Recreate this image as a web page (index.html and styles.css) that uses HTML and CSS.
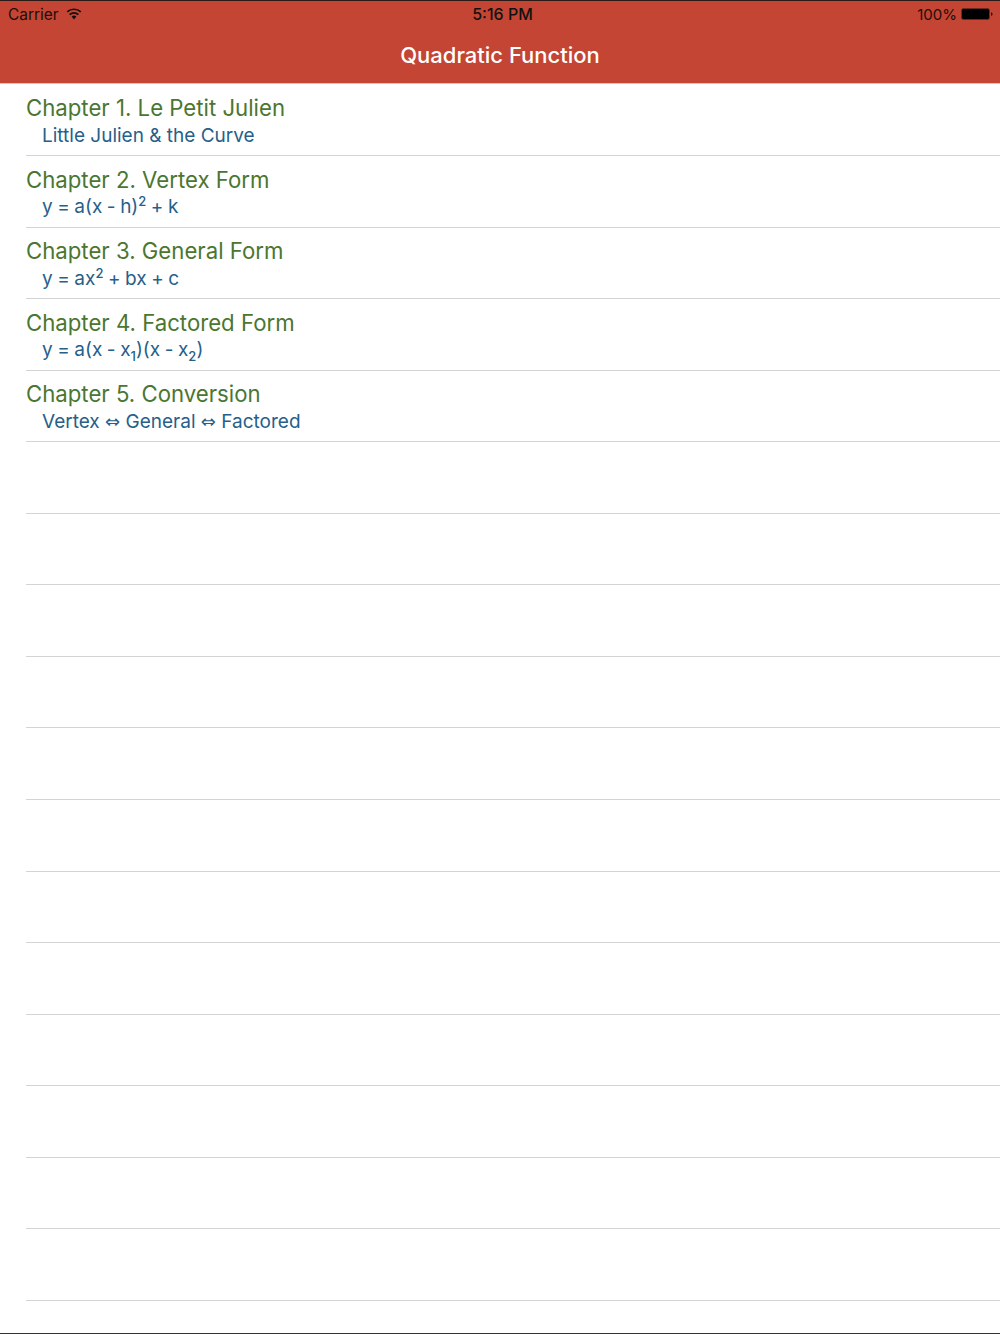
FILE: index.html
```html
<!DOCTYPE html>
<html lang="en">
<head>
<meta charset="utf-8">
<title>Quadratic Function</title>
<link rel="stylesheet" href="styles.css">
</head>
<body>
<div class="screen">
  <header class="bar">
    <div class="status">
      <div class="status-left">
        <span>Carrier</span>
        <svg class="wifi" width="16" height="12" viewBox="0 0 16 12"><path d="M8 11.5 5.6 8.6a3.6 3.6 0 0 1 4.8 0Z" fill="#111"/><path d="M3.6 6.6a6.4 6.4 0 0 1 8.8 0" fill="none" stroke="#111" stroke-width="1.7"/><path d="M1.2 3.9a10 10 0 0 1 13.6 0" fill="none" stroke="#111" stroke-width="1.7"/></svg>
      </div>
      <div class="status-time">5:16 PM</div>
      <div class="status-right">
        <span>100%</span>
        <svg class="battery" width="32" height="12" viewBox="0 0 32 12"><rect x="0.5" y="0.5" width="28" height="11" rx="2" fill="#000" stroke="#6e2a20"/><path d="M30 4.2c1 .2 1.5.9 1.5 1.8s-.5 1.6-1.5 1.8Z" fill="#111"/></svg>
      </div>
    </div>
    <h1 class="title">Quadratic Function</h1>
  </header>
  <main class="list">
    <div class="row"><div class="row-title">Chapter 1. Le Petit Julien</div><div class="row-sub">Little Julien &amp; the Curve</div></div>
    <div class="row"><div class="row-title">Chapter 2. Vertex Form</div><div class="row-sub math">y = a(x - h)<sup>2</sup> + k</div></div>
    <div class="row"><div class="row-title">Chapter 3. General Form</div><div class="row-sub math">y = ax<sup>2</sup> + bx + c</div></div>
    <div class="row"><div class="row-title">Chapter 4. Factored Form</div><div class="row-sub math">y = a(x - x<sub>1</sub>)(x - x<sub>2</sub>)</div></div>
    <div class="row"><div class="row-title">Chapter 5. Conversion</div><div class="row-sub">Vertex <span class="arrow">⇔</span> General <span class="arrow">⇔</span> Factored</div></div>
    <div class="row"></div><div class="row"></div><div class="row"></div><div class="row"></div><div class="row"></div><div class="row"></div>
    <div class="row"></div><div class="row"></div><div class="row"></div><div class="row"></div><div class="row"></div><div class="row"></div>
  </main>
</div>
</body>
</html>
```
FILE: styles.css
```css
* { box-sizing: border-box; }
html, body { margin: 0; padding: 0; }
body { background: #fff; font-family: Inter, "Liberation Sans", sans-serif; overflow: hidden; }
.screen { width: 1000px; height: 1334px; display: flex; flex-direction: column; border-bottom: 1px solid #333; overflow: hidden; }
.bar { height: 84px; flex: none; background: #c44533; border-top: 1px solid #2c1a16; border-bottom: 1px solid #c9c9c9; display: flex; flex-direction: column; }
.status { height: 26px; padding: 0 7px 0 8px; display: grid; grid-template-columns: 1fr auto 1fr; align-items: center; font-size: 15.4px; color: #1c0d0a; }
.status-left { display: flex; align-items: center; gap: 8px; }
.status-right { display: flex; align-items: center; justify-content: flex-end; gap: 4px; }
.status-right span { font-size: 15px; }
.status-time { font-size: 16px; font-weight: 500; color: #111; padding-left: 4px; }
.wifi { margin-top: -1px; }
.title { margin: 0; flex: 1; display: flex; align-items: center; justify-content: center; color: #fff; font-size: 22px; font-weight: 500; padding-bottom: 1px; }
.list { flex: 1; padding: 0.5px 0 0 26px; }
.row { height: 71.55px; border-bottom: 1px solid #d4d4d4; padding-top: 7.8px; }
.row-title { font-size: 22.2px; line-height: 31px; color: #4b7630; }
.row-sub { font-size: 19px; line-height: 22px; color: #26608a; padding-left: 16px; margin-top: 1.5px; }
.math { word-spacing: -0.8px; }
sup, sub { font-size: 13px; font-weight: 500; line-height: 0; }
.arrow { font-family: "DejaVu Sans", sans-serif; font-size: 18px; }
```
